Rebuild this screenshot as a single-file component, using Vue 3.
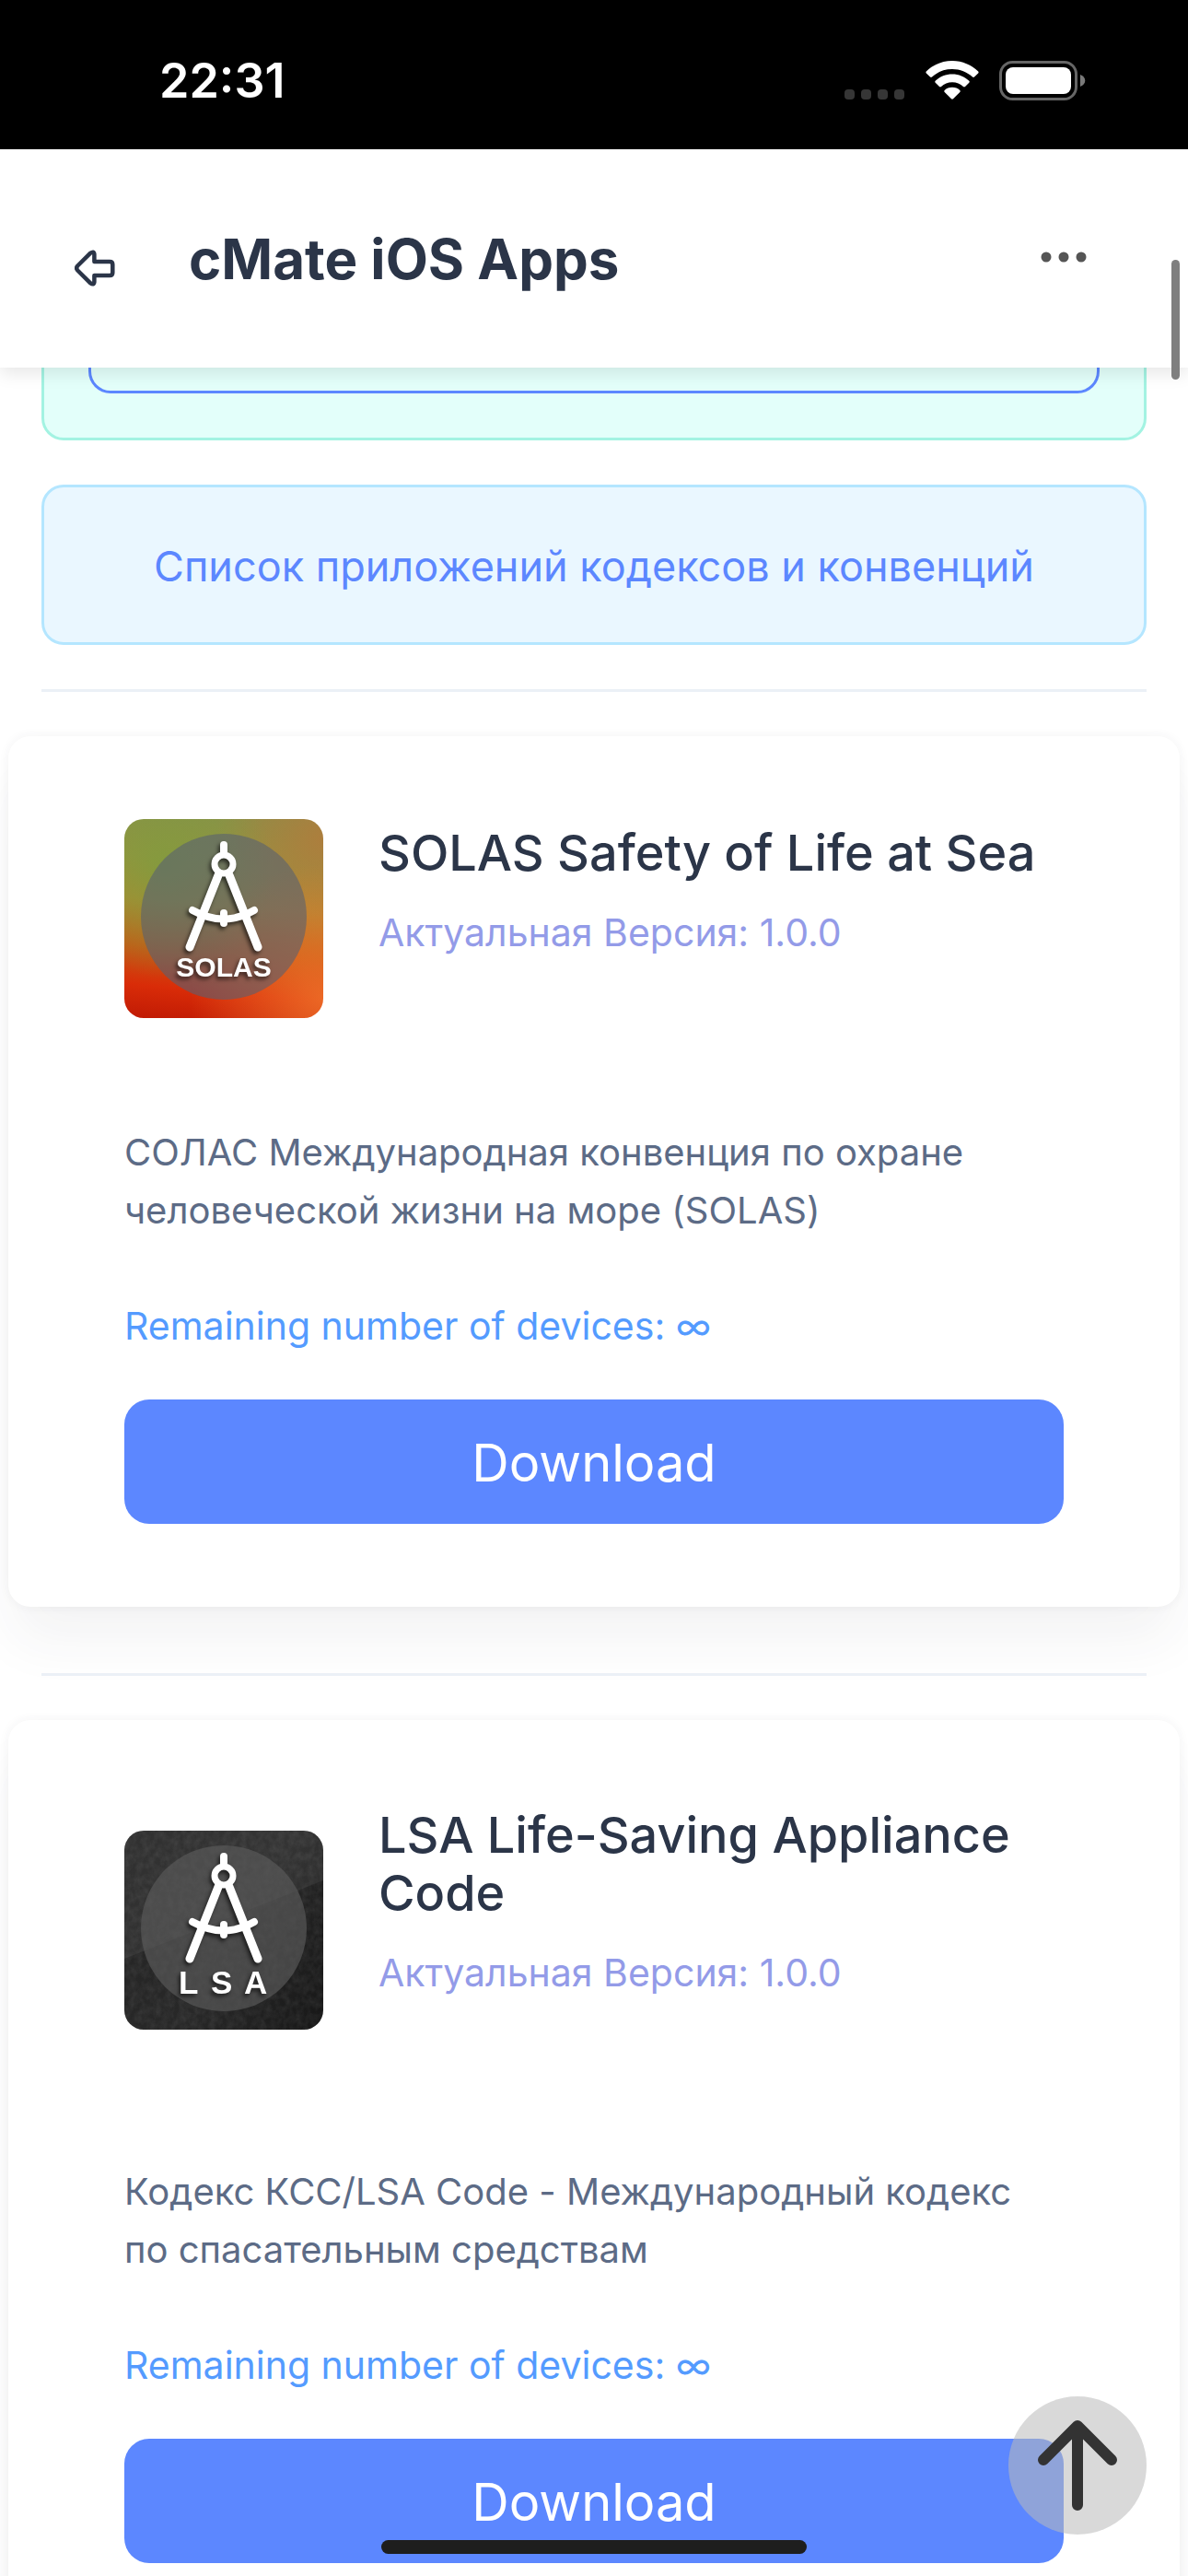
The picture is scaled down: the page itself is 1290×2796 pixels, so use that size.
<script setup>
const apps = [
  {
    id: 'solas',
    title: 'SOLAS Safety of Life at Sea',
    version: '1.0.0',
    description: 'СОЛАС Международная конвенция по охране человеческой жизни на море (SOLAS)',
    devices: '∞',
  },
  {
    id: 'lsa',
    title: 'LSA Life-Saving Appliance Code',
    version: '1.0.0',
    description: 'Кодекс КСС/LSA Code - Международный кодекс по спасательным средствам',
    devices: '∞',
  },
]
</script>

<template>
  <div class="screen">
    <div class="status-bar">
      <span class="status-time">22:31</span>
      <div class="status-icons">
        <svg class="status-dots" width="66" height="12" viewBox="0 0 66 12" fill="#363636">
          <rect x="0" y="0" width="11" height="11" rx="4" />
          <rect x="18" y="0" width="11" height="11" rx="4" />
          <rect x="36" y="0" width="11" height="11" rx="4" />
          <rect x="54" y="0" width="11" height="11" rx="4" />
        </svg>
        <svg width="58" height="42" viewBox="0 0 58 42" fill="#fff">
          <path d="M29 0C40 0 50 4.500 57.200 11.500Q58 12.500 57.200 13.500L53 17.600Q52 18.500 51 17.600C45 12 37.500 9 29 9C20.500 9 13 12 7 17.600Q6 18.500 5 17.600L.8 13.500Q0 12.500 .8 11.500C8 4.500 18 0 29 0Z" />
          <path d="M29 14.500C36 14.500 42.500 17.200 47.300 21.800Q48.200 22.800 47.300 23.700L43 28Q42 28.900 41 28C37.800 25 33.600 23.200 29 23.200C24.400 23.200 20.200 25 17 28Q16 28.900 15 28L10.700 23.700Q9.800 22.800 10.700 21.800C15.500 17.200 22 14.500 29 14.500Z" />
          <path d="M29 28.800C32.300 28.800 35.200 30 37.300 32Q38.200 33 37.300 33.900L30 41.300Q29 42.200 28 41.300L20.700 33.900Q19.800 33 20.700 32C22.800 30 25.700 28.800 29 28.800Z" />
        </svg>
        <svg width="94" height="43" viewBox="0 0 94 43">
          <rect x="1.500" y="1.500" width="82" height="40" rx="13" fill="none" stroke="#666" stroke-width="3" />
          <rect x="7" y="7" width="71" height="29" rx="8" fill="#fff" />
          <path d="M88 15C95 17.500 95 25.500 88 28Z" fill="#7a7a7a" />
        </svg>
      </div>
    </div>

    <header class="app-header">
      <a class="header-back" href="#" aria-label="Back">
        <svg width="44" height="40" viewBox="0 0 44 40" fill="none" stroke="#2b3548" stroke-width="4.500" stroke-linejoin="round">
          <path d="M3.300 17.500L17 3.800Q21 1 21.400 5V13H38Q41.300 13 41.300 16V25Q41.300 28 38 28H21.400V35Q21 39 17 36.200L3.300 22.500Q1 20 3.300 17.500Z" />
        </svg>
      </a>
      <h1 class="header-title">cMate iOS Apps</h1>
      <button class="header-menu" type="button" aria-label="Menu">
        <svg width="50" height="12" viewBox="0 0 50 12" fill="#555">
          <circle cx="6" cy="6" r="5.500" />
          <circle cx="25" cy="6" r="5.500" />
          <circle cx="44" cy="6" r="5.500" />
        </svg>
      </button>
    </header>

    <main class="content">
      <div class="notice notice-green">
        <div class="notice-inner"></div>
      </div>
      <div class="notice notice-blue">
        <a href="#">Список приложений кодексов и конвенций</a>
      </div>

      <template v-for="app in apps" :key="app.id">
        <hr class="divider" />
        <article class="card">
          <div class="card-head">
            <div class="app-icon" :class="'app-icon-' + app.id">
              <svg viewBox="0 0 216 216" fill="none">
                <template v-if="app.id === 'lsa'">
                  <filter id="grain">
                    <feTurbulence type="fractalNoise" baseFrequency="0.15 0.12" numOctaves="3" />
                    <feColorMatrix values="0 0 0 0 1  0 0 0 0 1  0 0 0 0 1  .5 0 0 0 -.14" />
                  </filter>
                  <path d="M0 0H216V54L0 139Z" fill="#fff" opacity=".06" />
                  <rect width="216" height="216" filter="url(#grain)" opacity=".25" />
                </template>
                <circle cx="108" cy="106" r="90" :fill="app.id === 'lsa' ? '#5a5a5a' : '#596172'" :opacity="app.id === 'lsa' ? 0.65 : 0.6" />
                <g class="compass" stroke="#fff" stroke-linecap="round">
                  <path d="M108 28V38" stroke-width="8" />
                  <circle cx="108" cy="49" r="10" stroke-width="7" />
                  <path d="M102 61L71 139M114 61L145 139" stroke-width="9" />
                  <path d="M74 99Q108 118 141 99" stroke-width="8" />
                  <path d="M108 102V113" stroke-width="8" />
                  <text v-if="app.id === 'solas'" class="icon-text" x="108" y="171" text-anchor="middle" font-size="30">SOLAS</text>
                  <text v-else class="icon-text" x="59 94 130" y="177" font-size="35">LSA</text>
                </g>
              </svg>
            </div>
            <div class="card-info">
              <h2 class="card-title">{{ app.title }}</h2>
              <p class="card-version">Актуальная Версия: {{ app.version }}</p>
            </div>
          </div>
          <p class="card-description">{{ app.description }}</p>
          <p class="card-devices">Remaining number of devices: {{ app.devices }}</p>
          <button class="card-button" type="button">Download</button>
        </article>
      </template>
    </main>

    <div class="scroll-thumb"></div>
    <button class="to-top" type="button" aria-label="Scroll to top">
      <svg width="90" height="102" viewBox="0 0 90 102" fill="none" stroke="#333" stroke-width="12" stroke-linecap="round" stroke-linejoin="round">
        <path d="M45 94V9M8 45L45 8L82 45" />
      </svg>
    </button>
    <div class="home-indicator"></div>
  </div>
</template>

<style>
body {
  margin: 0;
  background: #fff;
}
</style>

<style scoped>
.screen {
  position: relative;
  display: flex;
  flex-direction: column;
  height: 100vh;
  overflow: hidden;
  background: #fff;
  font-family: Inter, 'Noto Sans', sans-serif;
  font-size: 41px;
  line-height: 63px;
}

h1,
h2,
p {
  margin: 0;
}

.status-bar {
  display: flex;
  flex-shrink: 0;
  align-items: center;
  justify-content: space-between;
  box-sizing: border-box;
  height: 162px;
  padding: 12px 111px 0 173px;
  background: #000;
}

.status-time {
  color: #fff;
  font-size: 52px;
  font-weight: 600;
}

.status-icons {
  display: flex;
  align-items: center;
  gap: 22px;
}

.status-dots {
  align-self: flex-end;
}

.app-header {
  position: relative;
  z-index: 1;
  display: flex;
  flex-shrink: 0;
  align-items: center;
  box-sizing: border-box;
  height: 237px;
  padding: 0 110px 0 81px;
  background: #fff;
  box-shadow: 0 6px 18px rgba(0, 0, 0, 0.1);
}

.header-back {
  display: flex;
  padding-top: 20px;
}

.header-title {
  flex: 1;
  margin-left: 80px;
  color: #2b3548;
  font-size: 60px;
  font-weight: 700;
  line-height: 72px;
}

.header-menu {
  display: flex;
  padding: 0 0 4px;
  border: 0;
  background: none;
}

.content {
  flex: 1;
  min-height: 0;
  overflow-y: auto;
  scrollbar-width: none;
}

.notice {
  margin: 0 45px 48px;
  border: 3px solid;
  border-radius: 24px;
}

.notice-green {
  padding: 0 48px 48px;
  border-color: #a3f3e2;
  border-top: 0;
  border-top-left-radius: 0;
  border-top-right-radius: 0;
  background: #e3fffa;
}

.notice-inner {
  height: 25px;
  border: 3px solid #5c87ff;
  border-top: 0;
  border-radius: 0 0 24px 24px;
}

.notice-blue {
  padding: 54px 48px 51px;
  border-color: #b4e6ff;
  background: #eaf7ff;
  font-size: 45px;
  text-align: center;
}

.notice-blue a {
  color: #5c87ff;
  text-decoration: none;
}

.divider {
  height: 3px;
  margin: 0 45px;
  border: 0;
  background: #ebf0f6;
}

.card {
  margin: 48px 9px 72px;
  padding: 90px 126px;
  border-radius: 24px;
  background: #fff;
  box-shadow: 0 0 12px rgba(43, 53, 72, 0.06), 0 42px 60px -6px rgba(43, 53, 72, 0.06);
}

.card-head {
  display: flex;
  align-items: center;
  gap: 60px;
}

.app-icon {
  flex: none;
  width: 216px;
  height: 216px;
  overflow: hidden;
  border-radius: 21px;
}

.app-icon svg {
  display: block;
}

.app-icon-solas {
  background:
    radial-gradient(circle at 20% 25%, rgba(122, 158, 62, 0.7), transparent 50%),
    radial-gradient(circle at 100% 90%, rgba(240, 118, 44, 0.8), transparent 50%),
    radial-gradient(circle at 100% 10%, rgba(176, 124, 60, 0.9), transparent 40%),
    linear-gradient(5deg, #c01a04 0%, #d92c08 16%, #c65a14 34%, #b08a30 56%, #9a923e 75%, #88904a 100%);
}

.app-icon-lsa {
  background: linear-gradient(120deg, #242424, #282828 55%, #171717);
}

.compass {
  filter: drop-shadow(-2px 3px 2px rgba(0, 0, 0, 0.6));
}

.icon-text {
  fill: #fff;
  stroke: none;
  font-family: 'Liberation Sans', sans-serif;
  font-weight: 700;
}

.card-info {
  flex: 1;
  padding: 3px 0 60px;
}

.card-title {
  margin-bottom: 24px;
  color: #2b3548;
  font-size: 54px;
  font-weight: 500;
  line-height: 63px;
}

.card-version {
  color: #939be8;
}

.card-description {
  margin: 114px 0 63px;
  color: #5c6b86;
  font-size: 40px;
}

.card-devices {
  margin-bottom: 48px;
  color: #549bff;
}

.card-button {
  display: block;
  width: 100%;
  height: 135px;
  padding: 3px 0 0;
  border: 0;
  border-radius: 27px;
  background: #5c87ff;
  color: #fff;
  font-family: inherit;
  font-size: 56px;
}

.scroll-thumb {
  position: absolute;
  z-index: 2;
  top: 282px;
  right: 9px;
  width: 9px;
  height: 130px;
  border-radius: 5px;
  background: #7f7f7f;
}

.to-top {
  position: absolute;
  right: 45px;
  bottom: 45px;
  display: flex;
  align-items: center;
  justify-content: center;
  width: 150px;
  height: 150px;
  padding: 0;
  border: 0;
  border-radius: 50%;
  background: rgba(185, 185, 185, 0.55);
}

.home-indicator {
  position: absolute;
  bottom: 24px;
  left: 50%;
  width: 462px;
  height: 15px;
  margin-left: -231px;
  border-radius: 8px;
  background: #1e1e1e;
}
</style>
